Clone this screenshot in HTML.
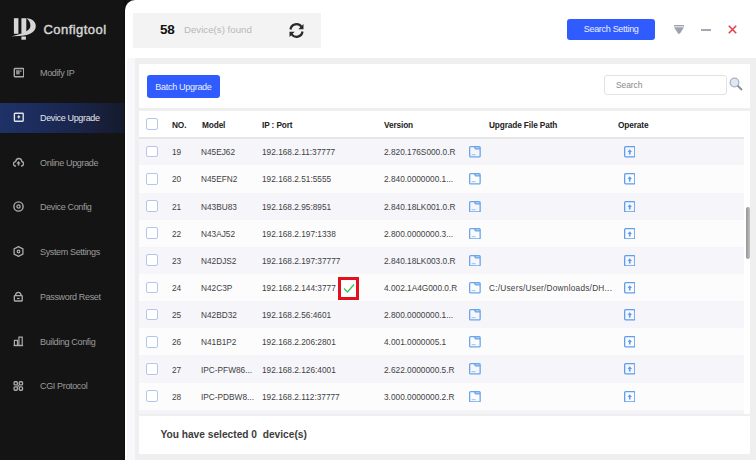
<!DOCTYPE html>
<html><head><meta charset="utf-8">
<style>
*{margin:0;padding:0;box-sizing:border-box}
html,body{width:756px;height:460px;overflow:hidden;background:#141414;font-family:"Liberation Sans",sans-serif}
.a{position:absolute}
#side{left:0;top:0;width:126px;height:460px;background:#141414}
.logo-t{left:43.5px;top:22px;font-size:13px;font-weight:normal;color:#d4d4d4;letter-spacing:0.45px;-webkit-text-stroke:0.45px #d4d4d4}
.mi{left:0;width:126px;height:30px}
.mi .t{position:absolute;left:40px;top:10px;font-size:9px;letter-spacing:-0.35px;color:#9c9c9c;white-space:nowrap}
.mi .ic{position:absolute;left:13px;top:9px;width:11px;height:11px}
.act{background:linear-gradient(90deg,#1e3268 0%,#1a2650 55%,#151a2a 100%)}
.act .t{color:#e6e6e6}
#main{left:125.4px;top:0;width:631px;height:460px;background:#fff;border-top-left-radius:10px}
#gray{left:134.6px;top:57.7px;width:622px;height:402px;background:#efefef}
#lgray{left:127px;top:57.8px;width:7.6px;height:403px;background:#f8f8fa}
#topbox{left:133.3px;top:13.2px;width:187.7px;height:34.8px;background:#f3f3f3}
.btn{background:#2f5bff;color:#fff;border-radius:3px;font-size:9px;letter-spacing:-0.3px;text-align:center;white-space:nowrap}
#tool{left:139px;top:64.2px;width:611px;height:43.6px;background:#fff}
#tbl{left:139px;top:111px;width:611px;height:302.7px;background:#fff}
.row{position:absolute;left:139px;width:604.7px;height:27.16px}
.row.o{background:#f5f5fa}
.row.e{background:#fcfcfd}
.cell{position:absolute;font-size:9.4px;letter-spacing:0;color:#3f3f3f;white-space:nowrap;top:8.1px;transform:scaleX(0.884);transform-origin:0 0}
.hd{font-weight:bold;color:#222;letter-spacing:-0.15px}
.cb{position:absolute;left:7px;top:7.6px;width:11.8px;height:11.7px;border:1.8px solid #b4c6ee;border-radius:2px;background:#fff}
#foot{left:139px;top:415.6px;width:611px;height:38.4px;background:#fff}
</style></head><body>
<div id="side" class="a">
  <svg class="a" style="left:8px;top:14px" width="32" height="30" viewBox="0 0 32 30">
    <rect x="5.9" y="4.2" width="4.5" height="15.6" fill="#d6d6d6"/>
    <path d="M13.4 4.2 H18.3 V18.2 L13.4 19.6 Z" fill="#d6d6d6"/>
    <path d="M18.4 4.2 C24.6 4.6 27.8 8 27.8 12 C27.8 18.6 20.5 22.6 3.4 22.2 C12.5 20.2 22.4 17.4 22.4 12 C22.4 8.6 21 5.8 18.4 4.2 Z" fill="#d6d6d6"/>
    <rect x="13.4" y="22.5" width="4.5" height="3.2" fill="#d6d6d6"/>
  </svg>
  <div class="a logo-t">Configtool</div>

  <div class="a mi" style="top:58px"><svg class="ic" viewBox="0 0 11 11"><rect x="1.3" y="1.5" width="9.4" height="8.2" rx="0.6" fill="none" stroke="#ababab" stroke-width="1.4"/><rect x="3.1" y="3.2" width="3.6" height="4.2" fill="#8f8f8f"/><rect x="7" y="3.2" width="1.6" height="1.8" fill="#777"/></svg><div class="t">Modify IP</div></div>
  <div class="a mi act" style="top:103px"><svg class="ic" viewBox="0 0 11 11"><rect x="1.4" y="1.2" width="8.8" height="8" rx="0.6" fill="none" stroke="#e2e2e2" stroke-width="1.4"/><path d="M5.8 3 L7.6 5.2 L6.4 5.6 L5.8 7.2 L5.2 5.6 L4 5.2 Z" fill="#e2e2e2"/></svg><div class="t">Device Upgrade</div></div>
  <div class="a mi" style="top:148px"><svg class="ic" viewBox="0 0 11 11"><path d="M3 9 H2.5 C1 9 0.5 7.8 0.5 6.8 C0.5 5.5 1.5 4.6 2.6 4.6 C3 2.6 4.3 1.5 5.7 1.5 C7.5 1.5 8.7 2.9 8.8 4.5 C10 4.7 10.5 5.7 10.5 6.7 C10.5 8 9.6 9 8.3 9 H8" fill="none" stroke="#ababab" stroke-width="1.3"/><path d="M5.5 4 L7.6 6.4 H6.3 V8.6 H4.7 V6.4 H3.4 Z" fill="#ababab"/></svg><div class="t">Online Upgrade</div></div>
  <div class="a mi" style="top:192px"><svg class="ic" viewBox="0 0 11 11"><circle cx="5.5" cy="5.5" r="4.6" fill="none" stroke="#ababab" stroke-width="1.4"/><circle cx="5.5" cy="5.5" r="1.6" fill="none" stroke="#ababab" stroke-width="1.3"/></svg><div class="t">Device Config</div></div>
  <div class="a mi" style="top:237px"><svg class="ic" viewBox="0 0 11 11"><path d="M5.5 0.6 L9.9 3 V8 L5.5 10.4 L1.1 8 V3 Z" fill="none" stroke="#ababab" stroke-width="1.3"/><circle cx="5.5" cy="5.5" r="1.3" fill="none" stroke="#ababab" stroke-width="1.2"/></svg><div class="t">System Settings</div></div>
  <div class="a mi" style="top:282px"><svg class="ic" viewBox="0 0 11 11"><path d="M2.4 4.6 C2.6 2.4 3.6 1.35 5.3 1.35 C7 1.35 8 2.4 8.2 4.6" fill="none" stroke="#ababab" stroke-width="1.3"/><rect x="1.35" y="4.6" width="7.9" height="5.4" rx="0.5" fill="none" stroke="#ababab" stroke-width="1.3"/><rect x="4" y="6.9" width="2.6" height="1.2" fill="#ababab"/></svg><div class="t">Password Reset</div></div>
  <div class="a mi" style="top:327px"><svg class="ic" viewBox="0 0 11 11"><path d="M0.7 9.5 H10.1" stroke="#ababab" stroke-width="1.3"/><rect x="1.4" y="4.4" width="3.1" height="5.1" fill="none" stroke="#ababab" stroke-width="1.2"/><rect x="5.9" y="1.1" width="3.3" height="8.4" fill="none" stroke="#ababab" stroke-width="1.2"/></svg><div class="t">Building Config</div></div>
  <div class="a mi" style="top:371px"><svg class="ic" viewBox="0 0 11 11"><rect x="1.05" y="1.75" width="3.3" height="3.1" rx="0.9" fill="none" stroke="#ababab" stroke-width="1.3"/><rect x="6.25" y="1.75" width="3.3" height="3.1" rx="0.9" fill="none" stroke="#ababab" stroke-width="1.3"/><rect x="1.05" y="6.95" width="3.3" height="3.3" rx="0.9" fill="none" stroke="#ababab" stroke-width="1.3"/><rect x="6.25" y="6.95" width="3.3" height="3.3" rx="0.9" fill="none" stroke="#ababab" stroke-width="1.3"/><path d="M4.4 4.9 L6.2 6.9 M6.2 4.9 L4.4 6.9" stroke="#ababab" stroke-width="0.9"/></svg><div class="t">CGI Protocol</div></div>
</div>

<div class="a" style="left:122.5px;top:0;width:3px;height:460px;background:linear-gradient(90deg,rgba(0,0,0,0),rgba(0,0,0,.45))"></div><div id="main" class="a"></div>
<div id="topbox" class="a">
  <div class="a" style="left:26.7px;top:9px;font-size:13.5px;font-weight:bold;color:#111;letter-spacing:-0.3px">58</div>
  <div class="a" style="left:50.7px;top:11.3px;font-size:9.7px;color:#b8b8b8;white-space:nowrap">Device(s) found</div>
  <svg class="a" style="left:154.7px;top:9.3px" width="17" height="17" viewBox="0 0 17 17">
    <path d="M2.5 7.5 A6 6 0 0 1 13.5 5" fill="none" stroke="#2a2a2a" stroke-width="2.2"/>
    <path d="M14.5 9.5 A6 6 0 0 1 3.5 12" fill="none" stroke="#2a2a2a" stroke-width="2.2"/>
    <path d="M15.5 2 V7.2 H10.3 Z" fill="#2a2a2a"/>
    <path d="M1.5 15 V9.8 H6.7 Z" fill="#2a2a2a"/>
  </svg>
</div>
<div class="a btn" style="left:566.8px;top:19px;width:88.7px;height:21px;line-height:21.6px;color:#eef1ff">Search Setting</div>
<svg class="a" style="left:674px;top:25px" width="10" height="9" viewBox="0 0 10 9"><rect x="0" y="0" width="10" height="1.4" fill="#9ea3ae"/><path d="M0 2.3 H10 L6.2 8.3 Q5 9.4 3.8 8.3 Z" fill="#9ea3ae"/></svg>
<div class="a" style="left:701px;top:29px;width:10px;height:2px;background:#a3a8b3"></div>
<svg class="a" style="left:728px;top:25px" width="9" height="9" viewBox="0 0 9 9"><path d="M0.8 0.8 L8.2 8.2 M8.2 0.8 L0.8 8.2" stroke="#e5404c" stroke-width="1.6"/></svg>

<div id="gray" class="a"></div><div id="lgray" class="a"></div>
<div id="tool" class="a">
  <div class="a btn" style="left:7.6px;top:10.6px;width:73.7px;height:23.4px;line-height:24.6px;color:#eef1ff">Batch Upgrade</div>
  <div class="a" style="left:465px;top:10.6px;width:122.5px;height:20px;border:1px solid #e2e2e2;border-radius:3px;background:#fff"></div>
  <div class="a" style="left:477px;top:16px;font-size:8.5px;color:#8a8a8a;letter-spacing:-0.1px">Search</div>
  <svg class="a" style="left:590px;top:13px" width="14" height="14" viewBox="0 0 14 14"><circle cx="5.5" cy="5.5" r="4.3" fill="#dfe8f3" stroke="#a8b4c2" stroke-width="1.3"/><path d="M8.6 8.6 L13 13" stroke="#8a8f96" stroke-width="2"/></svg>
</div>
<div id="tbl" class="a"></div><div class="a" style="left:139px;top:409.8px;width:604.7px;height:3.9px;background:#f3f3f8"></div>

<div class="row" style="top:111px;height:26px;background:#fff"><div class="cb" style="top:7.4px"></div><div class="cell hd" style="left:33px;top:7.6px;">NO.</div><div class="cell hd" style="left:63px;top:7.6px;">Model</div><div class="cell hd" style="left:123px;top:7.6px;">IP : Port</div><div class="cell hd" style="left:245px;top:7.6px;">Version</div><div class="cell hd" style="left:350px;top:7.6px;">Upgrade File Path</div><div class="cell hd" style="left:479px;top:7.6px;">Operate</div></div>
<div class="row o" style="top:138.20px"><div class="cb"></div><div class="cell" style="left:33px;">19</div><div class="cell" style="left:62px;">N45EJ62</div><div class="cell" style="left:123px;">192.168.2.11:37777</div><div class="cell" style="left:245px;">2.820.176S000.0.R</div><svg class="a" style="left:329.5px;top:8px" width="12" height="11.5" viewBox="0 0 12 11.5"><path d="M5.2 0.65 L6.6 2.8 H11.15 V1.6 Q11.15 0.65 10.2 0.65 Z" fill="#b4d3f5"/><path d="M1.6 0.65 H10.2 Q11.15 0.65 11.15 1.6 V9.9 Q11.15 10.85 10.2 10.85 H1.6 Q0.65 10.85 0.65 9.9 V1.6 Q0.65 0.65 1.6 0.65 Z M5.2 0.65 L6.6 2.8 H11.15" fill="none" stroke="#6ba6ec" stroke-width="1.3"/><path d="M2.6 8.7 H6.6" stroke="#8cbcf0" stroke-width="0.9"/></svg><svg class="a" style="left:484.5px;top:8px" width="11.5" height="11.5" viewBox="0 0 11.5 11.5"><rect x="0.65" y="0.65" width="10.2" height="10.2" rx="1" fill="none" stroke="#5e9ef0" stroke-width="1.3"/><path d="M5.75 3.2 L8 5.9 H6.6 V8.6 H4.9 V5.9 H3.5 Z" fill="#5e9ef0"/></svg></div>
<div class="row e" style="top:165.36px"><div class="cb"></div><div class="cell" style="left:33px;">20</div><div class="cell" style="left:62px;">N45EFN2</div><div class="cell" style="left:123px;">192.168.2.51:5555</div><div class="cell" style="left:245px;">2.840.0000000.1...</div><svg class="a" style="left:329.5px;top:8px" width="12" height="11.5" viewBox="0 0 12 11.5"><path d="M5.2 0.65 L6.6 2.8 H11.15 V1.6 Q11.15 0.65 10.2 0.65 Z" fill="#b4d3f5"/><path d="M1.6 0.65 H10.2 Q11.15 0.65 11.15 1.6 V9.9 Q11.15 10.85 10.2 10.85 H1.6 Q0.65 10.85 0.65 9.9 V1.6 Q0.65 0.65 1.6 0.65 Z M5.2 0.65 L6.6 2.8 H11.15" fill="none" stroke="#6ba6ec" stroke-width="1.3"/><path d="M2.6 8.7 H6.6" stroke="#8cbcf0" stroke-width="0.9"/></svg><svg class="a" style="left:484.5px;top:8px" width="11.5" height="11.5" viewBox="0 0 11.5 11.5"><rect x="0.65" y="0.65" width="10.2" height="10.2" rx="1" fill="none" stroke="#5e9ef0" stroke-width="1.3"/><path d="M5.75 3.2 L8 5.9 H6.6 V8.6 H4.9 V5.9 H3.5 Z" fill="#5e9ef0"/></svg></div>
<div class="row o" style="top:192.52px"><div class="cb"></div><div class="cell" style="left:33px;">21</div><div class="cell" style="left:62px;">N43BU83</div><div class="cell" style="left:123px;">192.168.2.95:8951</div><div class="cell" style="left:245px;">2.840.18LK001.0.R</div><svg class="a" style="left:329.5px;top:8px" width="12" height="11.5" viewBox="0 0 12 11.5"><path d="M5.2 0.65 L6.6 2.8 H11.15 V1.6 Q11.15 0.65 10.2 0.65 Z" fill="#b4d3f5"/><path d="M1.6 0.65 H10.2 Q11.15 0.65 11.15 1.6 V9.9 Q11.15 10.85 10.2 10.85 H1.6 Q0.65 10.85 0.65 9.9 V1.6 Q0.65 0.65 1.6 0.65 Z M5.2 0.65 L6.6 2.8 H11.15" fill="none" stroke="#6ba6ec" stroke-width="1.3"/><path d="M2.6 8.7 H6.6" stroke="#8cbcf0" stroke-width="0.9"/></svg><svg class="a" style="left:484.5px;top:8px" width="11.5" height="11.5" viewBox="0 0 11.5 11.5"><rect x="0.65" y="0.65" width="10.2" height="10.2" rx="1" fill="none" stroke="#5e9ef0" stroke-width="1.3"/><path d="M5.75 3.2 L8 5.9 H6.6 V8.6 H4.9 V5.9 H3.5 Z" fill="#5e9ef0"/></svg></div>
<div class="row e" style="top:219.68px"><div class="cb"></div><div class="cell" style="left:33px;">22</div><div class="cell" style="left:62px;">N43AJ52</div><div class="cell" style="left:123px;">192.168.2.197:1338</div><div class="cell" style="left:245px;">2.800.0000000.3...</div><svg class="a" style="left:329.5px;top:8px" width="12" height="11.5" viewBox="0 0 12 11.5"><path d="M5.2 0.65 L6.6 2.8 H11.15 V1.6 Q11.15 0.65 10.2 0.65 Z" fill="#b4d3f5"/><path d="M1.6 0.65 H10.2 Q11.15 0.65 11.15 1.6 V9.9 Q11.15 10.85 10.2 10.85 H1.6 Q0.65 10.85 0.65 9.9 V1.6 Q0.65 0.65 1.6 0.65 Z M5.2 0.65 L6.6 2.8 H11.15" fill="none" stroke="#6ba6ec" stroke-width="1.3"/><path d="M2.6 8.7 H6.6" stroke="#8cbcf0" stroke-width="0.9"/></svg><svg class="a" style="left:484.5px;top:8px" width="11.5" height="11.5" viewBox="0 0 11.5 11.5"><rect x="0.65" y="0.65" width="10.2" height="10.2" rx="1" fill="none" stroke="#5e9ef0" stroke-width="1.3"/><path d="M5.75 3.2 L8 5.9 H6.6 V8.6 H4.9 V5.9 H3.5 Z" fill="#5e9ef0"/></svg></div>
<div class="row o" style="top:246.84px"><div class="cb"></div><div class="cell" style="left:33px;">23</div><div class="cell" style="left:62px;">N42DJS2</div><div class="cell" style="left:123px;">192.168.2.197:37777</div><div class="cell" style="left:245px;">2.840.18LK003.0.R</div><svg class="a" style="left:329.5px;top:8px" width="12" height="11.5" viewBox="0 0 12 11.5"><path d="M5.2 0.65 L6.6 2.8 H11.15 V1.6 Q11.15 0.65 10.2 0.65 Z" fill="#b4d3f5"/><path d="M1.6 0.65 H10.2 Q11.15 0.65 11.15 1.6 V9.9 Q11.15 10.85 10.2 10.85 H1.6 Q0.65 10.85 0.65 9.9 V1.6 Q0.65 0.65 1.6 0.65 Z M5.2 0.65 L6.6 2.8 H11.15" fill="none" stroke="#6ba6ec" stroke-width="1.3"/><path d="M2.6 8.7 H6.6" stroke="#8cbcf0" stroke-width="0.9"/></svg><svg class="a" style="left:484.5px;top:8px" width="11.5" height="11.5" viewBox="0 0 11.5 11.5"><rect x="0.65" y="0.65" width="10.2" height="10.2" rx="1" fill="none" stroke="#5e9ef0" stroke-width="1.3"/><path d="M5.75 3.2 L8 5.9 H6.6 V8.6 H4.9 V5.9 H3.5 Z" fill="#5e9ef0"/></svg></div>
<div class="row e" style="top:274.00px"><div class="cb"></div><div class="cell" style="left:33px;">24</div><div class="cell" style="left:62px;">N42C3P</div><div class="cell" style="left:123px;">192.168.2.144:3777</div><div class="cell" style="left:245px;">4.002.1A4G000.0.R</div><svg class="a" style="left:329.5px;top:8px" width="12" height="11.5" viewBox="0 0 12 11.5"><path d="M5.2 0.65 L6.6 2.8 H11.15 V1.6 Q11.15 0.65 10.2 0.65 Z" fill="#b4d3f5"/><path d="M1.6 0.65 H10.2 Q11.15 0.65 11.15 1.6 V9.9 Q11.15 10.85 10.2 10.85 H1.6 Q0.65 10.85 0.65 9.9 V1.6 Q0.65 0.65 1.6 0.65 Z M5.2 0.65 L6.6 2.8 H11.15" fill="none" stroke="#6ba6ec" stroke-width="1.3"/><path d="M2.6 8.7 H6.6" stroke="#8cbcf0" stroke-width="0.9"/></svg><div class="cell" style="left:350px;letter-spacing:0.26px;">C:/Users/User/Downloads/DH...</div><svg class="a" style="left:484.5px;top:8px" width="11.5" height="11.5" viewBox="0 0 11.5 11.5"><rect x="0.65" y="0.65" width="10.2" height="10.2" rx="1" fill="none" stroke="#5e9ef0" stroke-width="1.3"/><path d="M5.75 3.2 L8 5.9 H6.6 V8.6 H4.9 V5.9 H3.5 Z" fill="#5e9ef0"/></svg><div class="a" style="left:198.5px;top:2.9px;width:21.5px;height:22.7px;border:3.1px solid #e3101e;background:#fff"></div><svg class="a" style="left:204px;top:8.8px" width="12" height="11" viewBox="0 0 12 11"><path d="M1 5.5 L4.5 9 L11 1.5" fill="none" stroke="#3cc85a" stroke-width="1.4"/></svg></div>
<div class="row o" style="top:301.16px"><div class="cb"></div><div class="cell" style="left:33px;">25</div><div class="cell" style="left:62px;">N42BD32</div><div class="cell" style="left:123px;">192.168.2.56:4601</div><div class="cell" style="left:245px;">2.800.0000000.1...</div><svg class="a" style="left:329.5px;top:8px" width="12" height="11.5" viewBox="0 0 12 11.5"><path d="M5.2 0.65 L6.6 2.8 H11.15 V1.6 Q11.15 0.65 10.2 0.65 Z" fill="#b4d3f5"/><path d="M1.6 0.65 H10.2 Q11.15 0.65 11.15 1.6 V9.9 Q11.15 10.85 10.2 10.85 H1.6 Q0.65 10.85 0.65 9.9 V1.6 Q0.65 0.65 1.6 0.65 Z M5.2 0.65 L6.6 2.8 H11.15" fill="none" stroke="#6ba6ec" stroke-width="1.3"/><path d="M2.6 8.7 H6.6" stroke="#8cbcf0" stroke-width="0.9"/></svg><svg class="a" style="left:484.5px;top:8px" width="11.5" height="11.5" viewBox="0 0 11.5 11.5"><rect x="0.65" y="0.65" width="10.2" height="10.2" rx="1" fill="none" stroke="#5e9ef0" stroke-width="1.3"/><path d="M5.75 3.2 L8 5.9 H6.6 V8.6 H4.9 V5.9 H3.5 Z" fill="#5e9ef0"/></svg></div>
<div class="row e" style="top:328.32px"><div class="cb"></div><div class="cell" style="left:33px;">26</div><div class="cell" style="left:62px;">N41B1P2</div><div class="cell" style="left:123px;">192.168.2.206:2801</div><div class="cell" style="left:245px;">4.001.0000005.1</div><svg class="a" style="left:329.5px;top:8px" width="12" height="11.5" viewBox="0 0 12 11.5"><path d="M5.2 0.65 L6.6 2.8 H11.15 V1.6 Q11.15 0.65 10.2 0.65 Z" fill="#b4d3f5"/><path d="M1.6 0.65 H10.2 Q11.15 0.65 11.15 1.6 V9.9 Q11.15 10.85 10.2 10.85 H1.6 Q0.65 10.85 0.65 9.9 V1.6 Q0.65 0.65 1.6 0.65 Z M5.2 0.65 L6.6 2.8 H11.15" fill="none" stroke="#6ba6ec" stroke-width="1.3"/><path d="M2.6 8.7 H6.6" stroke="#8cbcf0" stroke-width="0.9"/></svg><svg class="a" style="left:484.5px;top:8px" width="11.5" height="11.5" viewBox="0 0 11.5 11.5"><rect x="0.65" y="0.65" width="10.2" height="10.2" rx="1" fill="none" stroke="#5e9ef0" stroke-width="1.3"/><path d="M5.75 3.2 L8 5.9 H6.6 V8.6 H4.9 V5.9 H3.5 Z" fill="#5e9ef0"/></svg></div>
<div class="row o" style="top:355.48px"><div class="cb"></div><div class="cell" style="left:33px;">27</div><div class="cell" style="left:62px;">IPC-PFW86...</div><div class="cell" style="left:123px;">192.168.2.126:4001</div><div class="cell" style="left:245px;">2.622.0000000.5.R</div><svg class="a" style="left:329.5px;top:8px" width="12" height="11.5" viewBox="0 0 12 11.5"><path d="M5.2 0.65 L6.6 2.8 H11.15 V1.6 Q11.15 0.65 10.2 0.65 Z" fill="#b4d3f5"/><path d="M1.6 0.65 H10.2 Q11.15 0.65 11.15 1.6 V9.9 Q11.15 10.85 10.2 10.85 H1.6 Q0.65 10.85 0.65 9.9 V1.6 Q0.65 0.65 1.6 0.65 Z M5.2 0.65 L6.6 2.8 H11.15" fill="none" stroke="#6ba6ec" stroke-width="1.3"/><path d="M2.6 8.7 H6.6" stroke="#8cbcf0" stroke-width="0.9"/></svg><svg class="a" style="left:484.5px;top:8px" width="11.5" height="11.5" viewBox="0 0 11.5 11.5"><rect x="0.65" y="0.65" width="10.2" height="10.2" rx="1" fill="none" stroke="#5e9ef0" stroke-width="1.3"/><path d="M5.75 3.2 L8 5.9 H6.6 V8.6 H4.9 V5.9 H3.5 Z" fill="#5e9ef0"/></svg></div>
<div class="row e" style="top:382.64px"><div class="cb"></div><div class="cell" style="left:33px;">28</div><div class="cell" style="left:62px;">IPC-PDBW8...</div><div class="cell" style="left:123px;">192.168.2.112:37777</div><div class="cell" style="left:245px;">3.000.0000000.2.R</div><svg class="a" style="left:329.5px;top:8px" width="12" height="11.5" viewBox="0 0 12 11.5"><path d="M5.2 0.65 L6.6 2.8 H11.15 V1.6 Q11.15 0.65 10.2 0.65 Z" fill="#b4d3f5"/><path d="M1.6 0.65 H10.2 Q11.15 0.65 11.15 1.6 V9.9 Q11.15 10.85 10.2 10.85 H1.6 Q0.65 10.85 0.65 9.9 V1.6 Q0.65 0.65 1.6 0.65 Z M5.2 0.65 L6.6 2.8 H11.15" fill="none" stroke="#6ba6ec" stroke-width="1.3"/><path d="M2.6 8.7 H6.6" stroke="#8cbcf0" stroke-width="0.9"/></svg><svg class="a" style="left:484.5px;top:8px" width="11.5" height="11.5" viewBox="0 0 11.5 11.5"><rect x="0.65" y="0.65" width="10.2" height="10.2" rx="1" fill="none" stroke="#5e9ef0" stroke-width="1.3"/><path d="M5.75 3.2 L8 5.9 H6.6 V8.6 H4.9 V5.9 H3.5 Z" fill="#5e9ef0"/></svg></div>
<div class="a" style="left:139px;top:137px;width:604.7px;height:2px;background:#e6e6e8"></div>
<div id="foot" class="a">
  <div class="a" style="left:21.4px;top:13.3px;font-size:10.2px;font-weight:bold;color:#3c3c3c;white-space:pre">You have selected 0  device(s)</div>
</div>
<div class="a" style="left:745.5px;top:206.6px;width:4.6px;height:52.8px;background:linear-gradient(90deg,#959595,#a8a8a8 50%,#c4c4c4);border-radius:2px"></div>
</body></html>
